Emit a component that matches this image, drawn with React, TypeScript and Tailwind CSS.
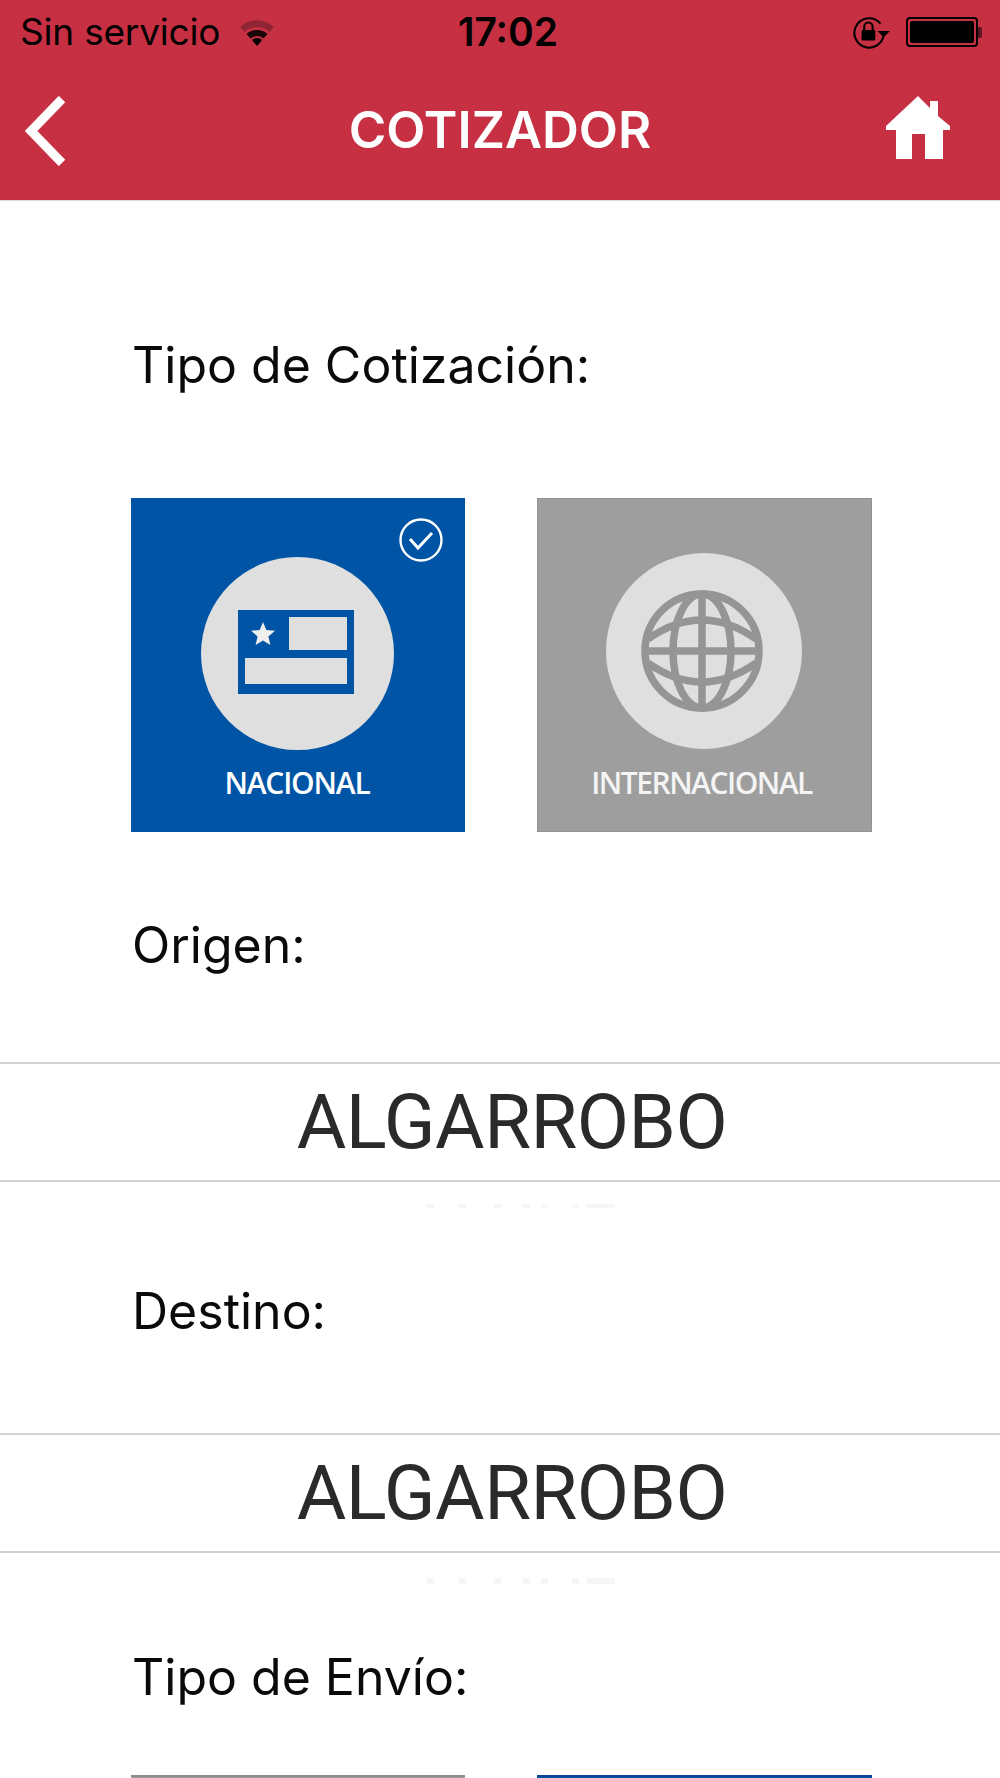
const Wifi = () => (
  <svg width="36" height="28" viewBox="0 0 36 28">
    <path d="M1 9 A25 25 0 0 1 35 9 L30.5 14 A18 18 0 0 0 5.5 14 Z" fill="#8f2534" />
    <path d="M7.5 16 A16 16 0 0 1 28.5 16 L24.5 20.5 A10 10 0 0 0 11.5 20.5 Z" fill="#1a0508" />
    <path d="M13 22 A7.5 7.5 0 0 1 23 22 L18 28 Z" fill="#000" />
  </svg>
);

const RotationLock = () => (
  <svg width="42" height="34" viewBox="0 0 40 32" fill="none">
    <path d="M30 8 A14 14 0 1 0 33 19" stroke="#000" strokeWidth="2" />
    <rect x="12" y="14" width="13" height="10" rx="1" fill="#000" />
    <path d="M14.5 14 V11 a4 4 0 0 1 8 0 V14" stroke="#000" strokeWidth="2" />
    <path d="M27 15 L39 15 L33 21 Z" fill="#000" />
  </svg>
);

const Battery = () => (
  <div className="flex items-center">
    <div className="w-[72px] h-[30px] rounded-[4px] border-2 border-black p-[2px]">
      <div className="w-full h-full bg-black rounded-[2px]" />
    </div>
    <div className="w-[4px] h-[11px] bg-[#5c1620] rounded-r-[2px]" />
  </div>
);

const Back = () => (
  <svg width="42" height="70" viewBox="0 0 42 70" fill="none" className="-ml-[25px]">
    <path d="M37 3 L6 35 L37 67" stroke="#fff" strokeWidth="9" />
  </svg>
);

const Home = () => (
  <svg width="64" height="64" viewBox="0 0 64 64" fill="#fff">
    <path d="M32 0 L44 12 V5 H52 V20 L64 30 V34 H57 V63 H39 V38 H26 V63 H10 V34 H0 V30 Z" />
  </svg>
);

const Flag = () => (
  <svg width="118" height="86" viewBox="0 0 118 86">
    <rect x="1" y="1" width="116" height="84" fill="#0054a6" />
    <rect x="52" y="8" width="58" height="33" fill="#dfdfdf" />
    <rect x="8" y="49" width="102" height="26" fill="#dfdfdf" />
    <path d="M26 13 L29.3 21 L38 21.7 L31.4 27.4 L33.4 36 L26 31.4 L18.6 36 L20.6 27.4 L14 21.7 L22.7 21 Z" fill="#efefef" />
  </svg>
);

const Globe = () => (
  <svg width="124" height="124" viewBox="0 0 124 124" fill="none" stroke="#959595" strokeWidth="7.5">
    <circle cx="62" cy="62" r="57" />
    <ellipse cx="62" cy="62" rx="29" ry="57" />
    <path d="M62 5 V119 M5 62 H119" />
    <path d="M8 50 Q62 12 116 50 M8 74 Q62 112 116 74" />
  </svg>
);

const Check = () => (
  <svg width="44" height="44" viewBox="0 0 44 44" fill="none" stroke="#fff" className="self-end">
    <circle cx="22" cy="22" r="20.5" strokeWidth="2.4" />
    <path d="M11 21 L19 30 L33 15" strokeWidth="3" />
  </svg>
);

const Label = ({ text, className }: { text: string; className: string }) => (
  <div className={`shrink-0 pl-[132px] h-[48px] leading-[48px] text-[50px] text-[#0a0a0a] font-['Inter',sans-serif] ${className}`}>{text}</div>
);

// feet of the next wheel row, the rest is clipped by the picker
const Picker = ({ className, feet }: { className: string; feet: string }) => (
  <div className={`shrink-0 h-[149px] ${className}`}>
    <div className="h-[120px] border-y-2 border-[#d2d2d2] flex items-center justify-center pl-[24px] text-[76px] tracking-[-0.5px] text-[#2a2a2a] font-['Roboto',sans-serif]">
      ALGARROBO
    </div>
    <div className={`flex pl-[427px] ${feet}`}>
      <span className="w-[7px] bg-[#f6f6f6]" />
      <span className="w-[7px] ml-[25px] bg-[#f6f6f6]" />
      <span className="w-[7px] ml-[28px] bg-[#f6f6f6]" />
      <span className="w-[7px] ml-[22px] bg-[#f6f6f6]" />
      <span className="w-[7px] ml-[11px] bg-[#f6f6f6]" />
      <span className="w-[7px] ml-[24px] bg-[#f6f6f6]" />
      <span className="w-[28px] ml-[8px] bg-[#f6f6f6]" />
    </div>
  </div>
);

const App = () => {
  return (
    <div className="w-[1000px] h-[1778px] overflow-hidden bg-white flex flex-col">
      <header className="h-[201px] bg-[#c72f42] border-b border-[#d9d9d9] flex flex-col shrink-0">
        <div className="h-[64px] pl-[20px] pr-[18px] grid grid-cols-3 items-center text-black font-['Inter',sans-serif]">
          <div className="flex items-center gap-[19px] whitespace-nowrap">
            <span className="text-[37px] tracking-[-0.2px]">Sin servicio</span>
            <Wifi />
          </div>
          <div className="text-center text-[39px] font-semibold pl-[14px]">17:02</div>
          <div className="flex items-center justify-end gap-[15px]">
            <RotationLock />
            <Battery />
          </div>
        </div>
        <div className="flex-1 px-[50px] grid grid-cols-[1fr_auto_1fr] items-center pb-[3px]">
          <Back />
          <div className="text-white text-[51px] font-semibold font-['Inter',sans-serif]">COTIZADOR</div>
          <div className="flex justify-end pb-[6px]"><Home /></div>
        </div>
      </header>

      <Label text="Tipo de Cotización:" className="mt-[140px]" />

      <div className="shrink-0 mt-[109px] pl-[131px] flex gap-[72px]">
        <div className="w-[334px] h-[334px] bg-[#0054a6] relative flex flex-col items-center pt-[59px] pr-[2px]">
          <div className="absolute top-[20px] right-[22px] flex"><Check /></div>
          <div className="w-[193px] h-[193px] rounded-full bg-[#dfdfdf] flex items-center justify-center pr-[2px] pb-[3px]"><Flag /></div>
          <div className="mt-[15px] text-[30px] leading-[36px] tracking-[-1.2px] font-semibold text-white font-['Open_Sans',sans-serif]">NACIONAL</div>
        </div>
        <div className="w-[335px] h-[334px] bg-[#9e9e9e] border border-[#929292] flex flex-col items-center pt-[54px] pr-[2px]">
          <div className="w-[196px] h-[196px] rounded-full bg-[#dfdfdf] flex items-center justify-center pr-[4px]"><Globe /></div>
          <div className="mt-[16px] -ml-[4px] text-[30px] leading-[36px] tracking-[-1.5px] font-semibold text-[#f4f4f4] font-['Open_Sans',sans-serif]">INTERNACIONAL</div>
        </div>
      </div>

      <Label text="Origen:" className="mt-[89px]" />
      <Picker className="mt-[93px]" feet="h-[4px] mt-[22px]" />
      <Label text="Destino:" className="mt-[76px]" />
      <Picker className="mt-[98px]" feet="h-[6px] mt-[25px]" />
      <Label text="Tipo de Envío:" className="mt-[71px]" />

      <div className="shrink-0 mt-[74px] pl-[131px] flex gap-[72px]">
        <div className="w-[334px] h-[334px] shrink-0 bg-[#9e9e9e] border-t-2 border-[#8c8c8c]" />
        <div className="w-[335px] h-[334px] shrink-0 bg-[#0054a6] border-t-2 border-[#0a4596]" />
      </div>
    </div>
  );
};

export default App;
